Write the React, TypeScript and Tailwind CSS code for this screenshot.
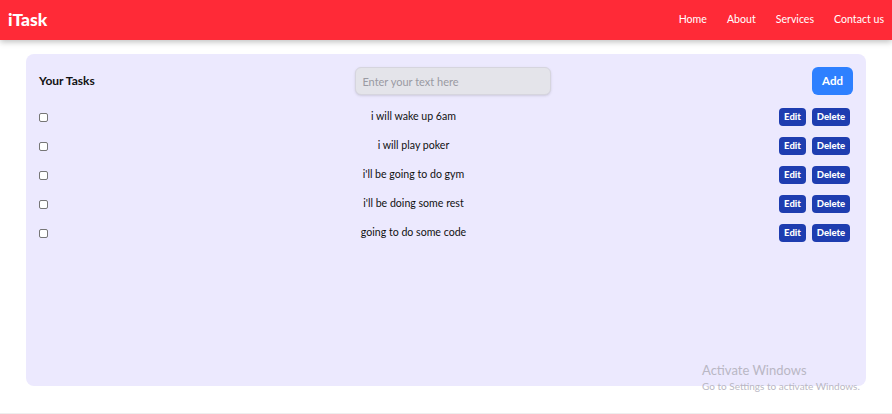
import React from "react";

const tasks = [
  "i will wake up 6am",
  "i will play poker",
  "i'll be going to do gym",
  "i'll be doing some rest",
  "going to do some code",
];

export default function App() {
  return (
    <div
      className="relative w-[892px] h-[414px] bg-white overflow-hidden"
      style={{ fontFamily: 'Lato, "Noto Sans", sans-serif' }}
    >
      <nav className="h-[40px] bg-[#ff2a37] flex items-center justify-between pl-[8px] pr-[8px] shadow-[0_2px_6px_rgba(0,0,0,0.25)] relative z-10">
        <span className="text-white font-black text-[17.5px]">iTask</span>
        <ul className="flex gap-[20px] text-white text-[10.6px]">
          <li>Home</li>
          <li>About</li>
          <li>Services</li>
          <li>Contact us</li>
        </ul>
      </nav>

      <div className="mx-[26px] mt-[14px] h-[332px] rounded-lg bg-[#ece9fe] pt-[13px] pl-[13px]">
        <div className="flex items-center justify-between pr-[13px]">
          <h2 className="font-bold text-[12px] text-[#111]">Your Tasks</h2>
          <input
            placeholder="Enter your text here"
            className="w-[196px] h-[28px] rounded-md bg-[#e4e4ea] border border-[#d6d5de] shadow-sm px-[6px] text-[11px] placeholder:text-[#9a9aa3] outline-none"
          />
          <button className="w-[41px] h-[28px] rounded-md bg-[#2e80ff] text-white text-[11.5px] font-bold">
            Add
          </button>
        </div>

        <div className="flex flex-col gap-[11px] mt-[13px] pr-[16px]">
          {tasks.map((t) => (
            <div key={t} className="h-[18px] flex items-center justify-between">
              <input
                type="checkbox"
                className="appearance-none w-[9px] h-[9px] border border-[#767676] rounded-[2px] bg-white"
              />
              <span className="text-[10.6px] text-[#111]">{t}</span>
              <div className="flex gap-[6px]">
                <button className="w-[27px] h-[18px] rounded bg-[#1e3db0] text-white text-[9.5px] font-black">
                  Edit
                </button>
                <button className="w-[38px] h-[18px] rounded bg-[#1e3db0] text-white text-[9.5px] font-black">
                  Delete
                </button>
              </div>
            </div>
          ))}
        </div>
      </div>

      <div className="absolute left-[702px] top-[364px] text-[#b9b7c4] leading-none">
        <div className="text-[13px]">Activate Windows</div>
        <div className="text-[10px] mt-[4px]">Go to Settings to activate Windows.</div>
      </div>
      <div className="absolute left-0 right-0 bottom-0 h-px bg-[#eeeeee]" />
    </div>
  );
}
